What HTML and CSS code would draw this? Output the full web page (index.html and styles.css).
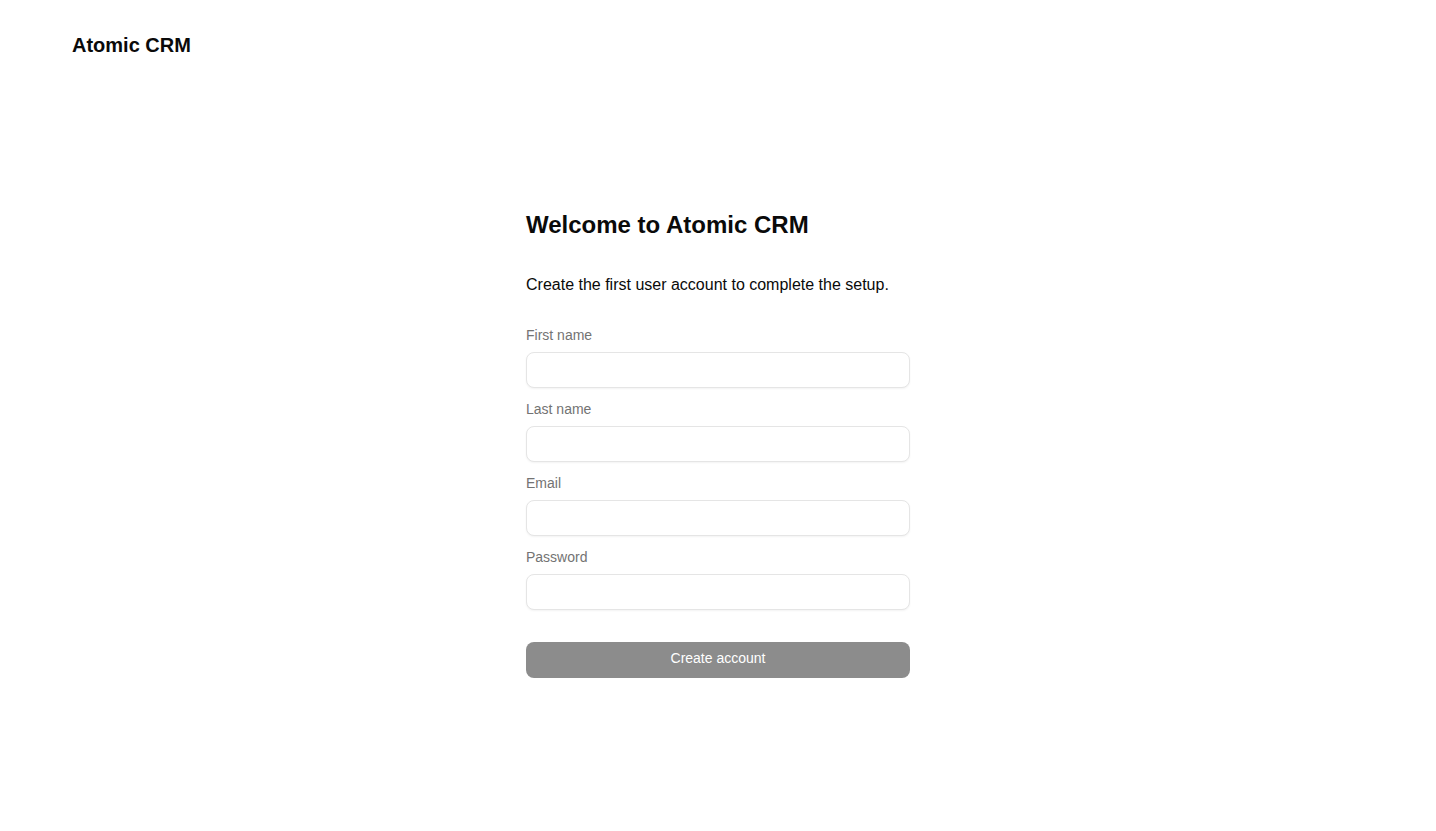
FILE: index.html
```html
<!DOCTYPE html>
<html>
<head>
<meta charset="utf-8">
<link rel="stylesheet" href="styles.css">
</head>
<body>
<header class="topbar">
  <div class="brand">Atomic CRM</div>
</header>
<main class="main">
  <form class="card">
    <h1 class="title">Welcome to Atomic CRM</h1>
    <p class="lead">Create the first user account to complete the setup.</p>
    <div class="fields">
      <div class="field">
        <label class="label">First name</label>
        <input class="input" type="text">
      </div>
      <div class="field">
        <label class="label">Last name</label>
        <input class="input" type="text">
      </div>
      <div class="field">
        <label class="label">Email</label>
        <input class="input" type="email">
      </div>
      <div class="field">
        <label class="label">Password</label>
        <input class="input" type="password">
      </div>
    </div>
    <button class="btn" type="button">Create account</button>
  </form>
</main>
</body>
</html>
```

FILE: styles.css
```css
* { box-sizing: border-box; }
html, body {
  margin: 0;
  padding: 0;
  background: #ffffff;
  font-family: "Liberation Sans", Arial, Helvetica, sans-serif;
  color: #0a0a0a;
}
.topbar {
  padding: 31px 72px 0;
}
.brand {
  font-size: 20px;
  line-height: 28px;
  font-weight: 700;
}
.main {
  display: flex;
  justify-content: center;
  padding-top: 150px;
}
.card {
  width: 384px;
  display: flex;
  flex-direction: column;
}
.title {
  margin: 0;
  font-size: 24px;
  line-height: 32px;
  font-weight: 700;
}
.lead {
  margin: 32px 0 0;
  font-size: 16px;
  line-height: 24px;
}
.fields {
  margin-top: 28px;
  display: flex;
  flex-direction: column;
  gap: 11px;
}
.field {
  display: flex;
  flex-direction: column;
  gap: 7px;
}
.label {
  font-size: 14px;
  line-height: 20px;
  color: #737373;
}
.input {
  height: 36px;
  width: 100%;
  border: 1px solid #e5e5e5;
  border-radius: 8px;
  background: #fff;
  box-shadow: 0 1px 2px rgba(0,0,0,0.05);
  font: inherit;
  padding: 4px 12px;
  outline: none;
}
.btn {
  margin-top: 32px;
  height: 36px;
  width: 100%;
  border: none;
  border-radius: 8px;
  background: #8c8c8c;
  color: #ffffff;
  font-family: inherit;
  font-size: 14px;
  line-height: 20px;
  padding: 0 0 5px;
}
```
